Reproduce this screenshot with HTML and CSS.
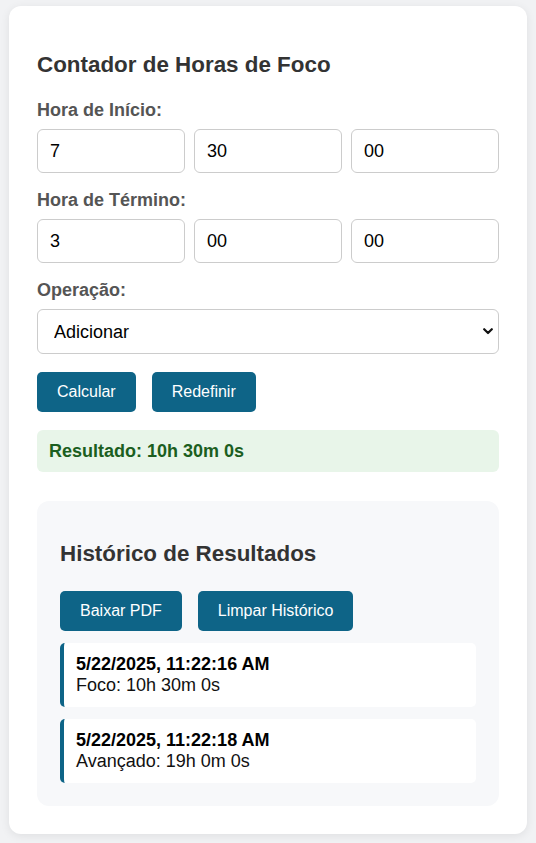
FILE: index.html
```html
<!DOCTYPE html>
<html lang="pt-BR">
<head>
    <meta charset="UTF-8">
    <meta name="viewport" content="width=device-width, initial-scale=1.0">
    <title>Contador de Horas de Foco</title>
    <link rel="stylesheet" href="styles.css">
</head>
<body>
    <main class="container">
        <h2 class="title">Contador de Horas de Foco</h2>

        <label class="field-label" for="startHour">Hora de Início:</label>
        <div class="time-row">
            <input type="text" id="startHour" class="time-input" value="7">
            <input type="text" id="startMin" class="time-input" value="30">
            <input type="text" id="startSec" class="time-input" value="00">
        </div>

        <label class="field-label" for="endHour">Hora de Término:</label>
        <div class="time-row">
            <input type="text" id="endHour" class="time-input" value="3">
            <input type="text" id="endMin" class="time-input" value="00">
            <input type="text" id="endSec" class="time-input" value="00">
        </div>

        <label class="field-label" for="operation">Operação:</label>
        <div class="select-wrap">
            <select id="operation" class="select">
                <option>Adicionar</option>
                <option>Subtrair</option>
            </select>
            <svg class="chevron" width="10" height="7" viewBox="0 0 10 7">
                <polyline points="1.2,1.2 5,5 8.8,1.2" fill="none" stroke="#111" stroke-width="2.2" stroke-linecap="round" stroke-linejoin="round"/>
            </svg>
        </div>

        <div class="actions">
            <button class="btn">Calcular</button>
            <button class="btn">Redefinir</button>
        </div>

        <div class="result">Resultado: 10h 30m 0s</div>

        <section class="history">
            <h2 class="title">Histórico de Resultados</h2>
            <div class="actions">
                <button class="btn">Baixar PDF</button>
                <button class="btn">Limpar Histórico</button>
            </div>
            <ul class="history-list">
                <li class="entry">
                    <strong>5/22/2025, 11:22:16 AM</strong><br>
                    Foco: 10h 30m 0s
                </li>
                <li class="entry">
                    <strong>5/22/2025, 11:22:18 AM</strong><br>
                    Avançado: 19h 0m 0s
                </li>
            </ul>
        </section>
    </main>
</body>
</html>
```

FILE: styles.css
```css
body {
    margin: 0;
    padding: 6px 9px 11px;
    font-family: "Liberation Sans", Arial, sans-serif;
    background-color: #f1f2f4;
    color: #111;
}

.container {
    background-color: #fff;
    border-radius: 12px;
    padding: 28px;
    box-shadow: 0 2px 10px rgba(0, 0, 0, 0.08);
}

.title {
    margin: 18px 0 22px;
    font-size: 22.4px;
    font-weight: bold;
    color: #333;
}

.field-label {
    display: block;
    margin-bottom: 8px;
    font-size: 18px;
    font-weight: bold;
    color: #555;
}

.time-row {
    display: grid;
    grid-template-columns: repeat(3, 1fr);
    gap: 9px;
    margin-bottom: 17px;
}

.time-input,
.select {
    box-sizing: border-box;
    width: 100%;
    margin: 0;
    border: 1px solid #ccc;
    border-radius: 6px;
    font-family: inherit;
    font-size: 18px;
    color: #000;
    background-color: #fff;
}

.time-input {
    height: 44px;
    padding: 0 12px;
}

.select-wrap {
    position: relative;
}

.select {
    height: 45px;
    padding: 0 16px;
    appearance: none;
    -webkit-appearance: none;
}

.chevron {
    position: absolute;
    right: 6px;
    top: 19px;
    pointer-events: none;
}

.actions {
    display: flex;
    gap: 16px;
    margin-top: 18px;
}

.btn {
    padding: 11px 20px;
    border: none;
    border-radius: 5px;
    font-family: inherit;
    font-size: 16px;
    line-height: 18px;
    color: #fff;
    background-color: #0e6487;
    cursor: pointer;
}

.result {
    margin-top: 18px;
    padding: 11px 12px;
    border-radius: 6px;
    font-size: 18px;
    line-height: 20px;
    font-weight: bold;
    color: #1b5e20;
    background-color: #e8f5e9;
}

.history {
    margin-top: 29px;
    padding: 23px;
    border-radius: 12px;
    background-color: #f7f8fa;
}

.history .title {
    margin: 17px 0 24px;
}

.history .actions {
    margin-top: 0;
}

.history-list {
    list-style: none;
    margin: 12px 0 0;
    padding: 0;
    display: flex;
    flex-direction: column;
    gap: 12px;
}

.entry {
    padding: 11px 12px;
    border-left: 4px solid #0e6487;
    border-radius: 5px;
    background-color: #fff;
    font-size: 18px;
    line-height: 21px;
    color: #111;
}

.entry strong {
    color: #000;
}
```
